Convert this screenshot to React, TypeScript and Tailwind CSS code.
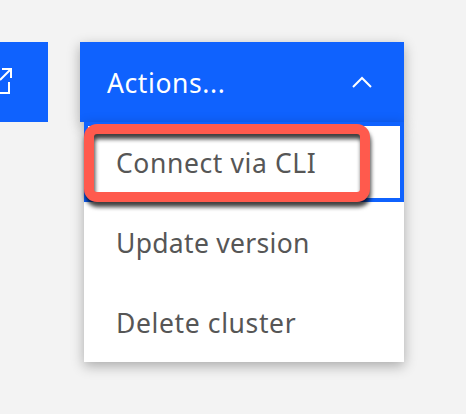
import React from "react";

const items = [
  { label: "Update version", spacing: "tracking-[0.3px]" },
  { label: "Delete cluster", spacing: "tracking-[0.62px]" },
];

export default function App() {
  return (
    <main className="flex h-[414px] w-[466px] items-start gap-8 overflow-hidden bg-[#f3f3f3] pt-[42px] font-['Noto_Sans',sans-serif] text-[26.5px] leading-none">
      <button aria-label="Open" className="flex h-20 w-12 shrink-0 items-center bg-[#0f62fe]">
        <svg width="14" height="30" viewBox="0 0 14 30" fill="none" stroke="white" strokeWidth="2">
          <path d="M2 2H11V11M11 2L0 13M9 15V26H0" />
        </svg>
      </button>
      <section className="w-[324px] shrink-0">
        <button className="flex h-20 w-full items-center justify-between bg-[#0f62fe] pr-8 pl-[27px] text-white shadow-[0_4px_12px_rgba(0,0,0,0.3)]">
          <span className="pt-0.5 tracking-[0.6px]">Actions...</span>
          <svg width="20" height="12" viewBox="0 0 20 12" fill="none" stroke="white" strokeWidth="2">
            <path d="M1 11L10 2L19 11" />
          </svg>
        </button>
        <ul className="ml-1 bg-white text-[#565656] shadow-[0_4px_12px_rgba(0,0,0,0.3)]">
          <li className="relative flex h-20 items-center border-4 border-[#0f62fe] pl-7">
            <span className="pt-0.5 tracking-[0.6px]">Connect via CLI</span>
            <div className="absolute -top-0.5 -left-1 h-[78px] w-[286px] rounded-[13px] border-10 border-[#ff5a4d] drop-shadow-[1px_5px_2px_rgba(0,0,0,0.75)]" />
          </li>
          {items.map((item) => (
            <li key={item.label} className="flex h-20 items-center pt-0.5 pl-8">
              <span className={item.spacing}>{item.label}</span>
            </li>
          ))}
        </ul>
      </section>
    </main>
  );
}
